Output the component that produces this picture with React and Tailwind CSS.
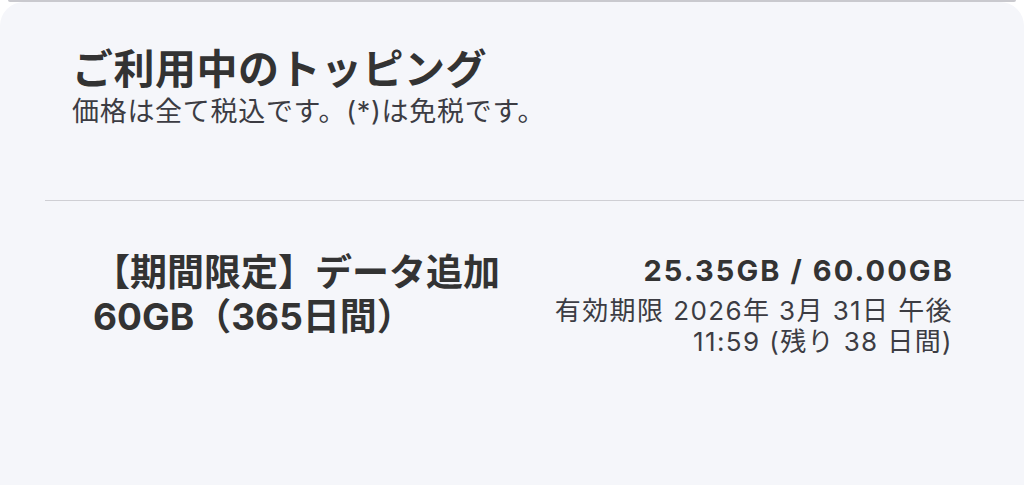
import React from 'react';

const font = { fontFamily: '"Inter", "Noto Sans CJK JP", sans-serif' };

const App = () => {
   return (
      <div className="w-[1024px] h-[485px] bg-white overflow-hidden text-[#333333]" style={font}>
         {/* bottom edge of the card above */}
         <div className="h-[2px] mx-[8px] bg-[#c9c9ce] rounded-b-full"></div>

         <div className="bg-[#f5f6fa] rounded-t-[24px] h-[483px]">
            {/* Header */}
            <div className="pl-[72px] pt-[43px] pb-[72px]">
               <h2 className="text-[41px] leading-[48px] tracking-[0.5px] font-bold">ご利用中のトッピング</h2>
               <p className="text-[27px] leading-[32px] tracking-[0.7px] text-[#3c3c43] mt-[3px]">価格は全て税込です。(*)は免税です。</p>
            </div>

            <div className="ml-[45px] border-t border-[#cfcfd4]"></div>

            {/* Item */}
            <div className="flex justify-between items-start pl-[93px] pr-[72px] pt-[50px]">
               <div className="text-[37px] leading-[44px] font-bold">
                  <div>【期間限定】データ追加</div>
                  <div>60GB（365日間）</div>
               </div>
               <div className="text-right flex flex-col items-end mt-[3px]">
                  <div className="text-[29px] leading-[34px] tracking-[2.1px] font-bold mr-[-2px]">25.35GB / 60.00GB</div>
                  <div className="text-[26px] leading-[31px] tracking-[1.4px] text-[#3c3c43] mt-[7px] mr-[-1px]">
                     <div>有効期限 2026年 3月 31日 午後</div>
                     <div>11:59 (残り 38 日間)</div>
                  </div>
               </div>
            </div>
         </div>
      </div>
   );
};

export default App;
